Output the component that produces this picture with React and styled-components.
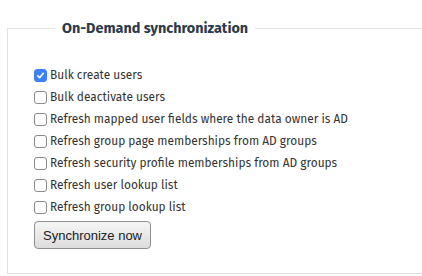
import React, { useState } from "react";
import styled, { createGlobalStyle } from "styled-components";

const Global = createGlobalStyle`
  html, body { margin: 0; padding: 0; background: #fff; overflow: hidden; }
  body { font-family: "Fira Sans", Lato, "Noto Sans", sans-serif; }
`;

const Page = styled.div`
  padding: 20px 0 0 7px;
  width: 460px;
`;

const Fieldset = styled.fieldset`
  margin: 0;
  border: 1px solid #e2e2e2;
  border-right: none;
  padding: 27px 0 0 26px;
  height: 225px;
  box-sizing: content-box;
`;

const Legend = styled.legend`
  margin-left: 21px;
  padding: 0 7px;
  font-family: "Fira Sans", Lato, "Noto Sans", sans-serif;
  font-weight: 700;
  font-size: 14.4px;
  color: #2c3b4c;
`;

const List = styled.div`
  display: flex;
  flex-direction: column;
`;

const Row = styled.label`
  display: flex;
  align-items: center;
  gap: 3px;
  height: 22px;
  font-size: 11.9px;
  color: #333;
  cursor: pointer;
`;

const Box = styled.input.attrs({ type: "checkbox" })`
  appearance: none;
  margin: 0;
  width: 13px;
  height: 13px;
  border-radius: 3px;
  border: 1px solid #8a8a8a;
  background: #fff;
  box-sizing: border-box;
  &:checked {
    border-color: #3c82f6;
    background: #3c82f6 url("data:image/svg+xml;utf8,<svg xmlns='http://www.w3.org/2000/svg' viewBox='0 0 12 12'><path d='M3 6.3l2 2.1L9 3.6' fill='none' stroke='white' stroke-width='1.8' stroke-linecap='round' stroke-linejoin='round'/></svg>") center/11px 11px no-repeat;
  }
`;

const Button = styled.button`
  margin-top: 3px;
  align-self: flex-start;
  height: 28px;
  width: 117px;
  padding: 0;
  font-family: "Liberation Sans", Arial, sans-serif;
  font-size: 13px;
  color: #222;
  border: 1px solid #8f8f8f;
  border-radius: 4px;
  background: linear-gradient(#f6f6f6, #dcdcdc);
`;

const items = [
  "Bulk create users",
  "Bulk deactivate users",
  "Refresh mapped user fields where the data owner is AD",
  "Refresh group page memberships from AD groups",
  "Refresh security profile memberships from AD groups",
  "Refresh user lookup list",
  "Refresh group lookup list",
];

export default function App() {
  const [checked, setChecked] = useState([true, false, false, false, false, false, false]);
  return (
    <>
      <Global />
      <Page>
        <Fieldset>
          <Legend>On-Demand synchronization</Legend>
          <List>
            {items.map((t, i) => (
              <Row key={t}>
                <Box
                  checked={checked[i]}
                  onChange={() => setChecked(c => c.map((v, j) => (j === i ? !v : v)))}
                />
                {t}
              </Row>
            ))}
            <Button>Synchronize now</Button>
          </List>
        </Fieldset>
      </Page>
    </>
  );
}
